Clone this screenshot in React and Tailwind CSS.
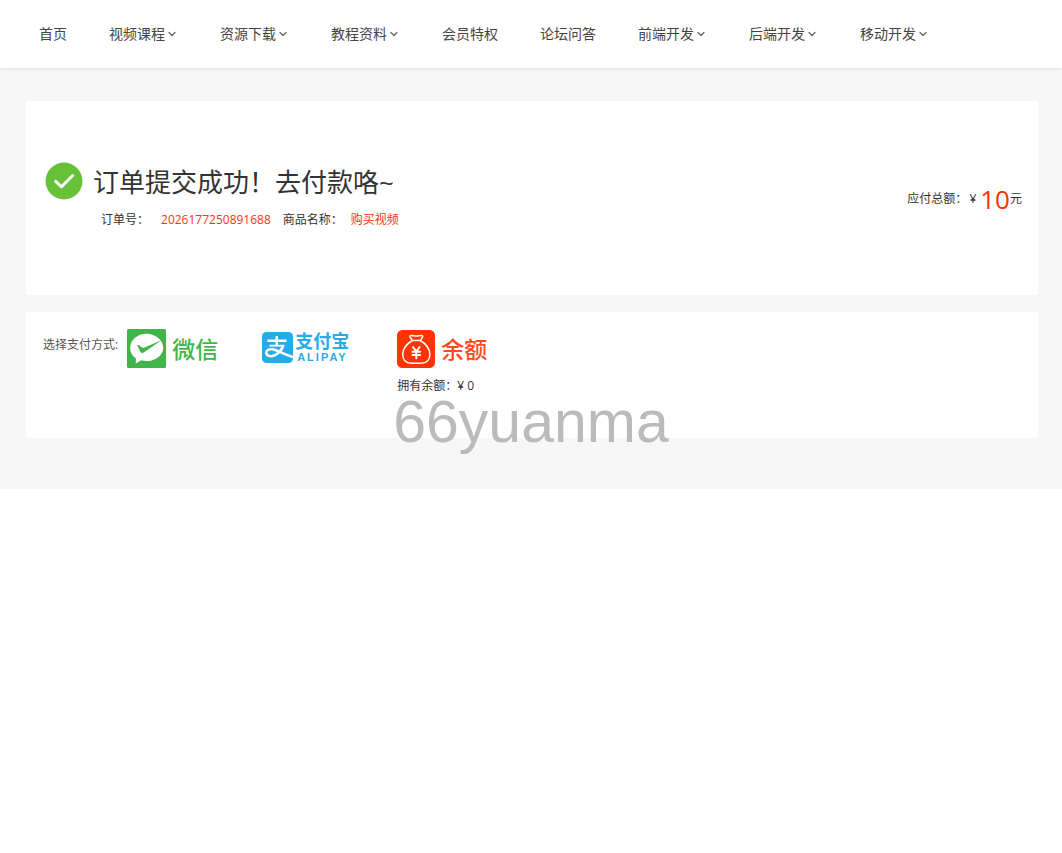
import { ChevronDown } from 'lucide-react'

const NAV = [
  { label: '首页' },
  { label: '视频课程', menu: true },
  { label: '资源下载', menu: true },
  { label: '教程资料', menu: true },
  { label: '会员特权' },
  { label: '论坛问答' },
  { label: '前端开发', menu: true },
  { label: '后端开发', menu: true },
  { label: '移动开发', menu: true },
]

function WechatIcon() {
  return (
    <svg viewBox="0 0 39 39" className="w-[39px] h-[39px]" aria-hidden="true">
      <rect width="39" height="39" rx="1.5" fill="#41b549" />
      <path
        d="M19.500 4.800C10.400 4.800 3.200 11 3.200 19c0 4.400 2.200 8 5.800 10.600L8.700 34.500l5.500-3.200c1.700.5 3.500.8 5.300.8 9.300 0 16.700-6 16.700-13.400S28.500 4.800 19.500 4.800z"
        fill="#fff"
      />
      <path d="M10.200 16.200c1.200-.4 2.200.2 3.200 1.200l3 1.700L35 11 17 23.300c-1.500 1-2.900.9-3.600-.6z" fill="#41b549" />
    </svg>
  )
}

function AlipayIcon() {
  return (
    <svg viewBox="0 0 31 31" className="w-[31px] h-[31px]" aria-hidden="true">
      <rect width="31" height="31" rx="4.5" fill="#28abec" />
      <g fill="none" stroke="#fff" strokeLinecap="butt">
        <path d="M5.500 8.700h19M14.800 4v10" strokeWidth="2.400" />
        <path d="M7.500 13.700h14.500" strokeWidth="1.800" />
        <path
          d="M21.500 13c-1.500 4.500-4.500 7.800-8 9.900-3.500 2.100-8.800 1.600-9.200-1.800-.4-3.200 3.600-4.600 7.500-3.600 5 1.400 10 5 19.200 7.500"
          strokeWidth="2.500"
        />
      </g>
    </svg>
  )
}

function BalanceIcon() {
  return (
    <svg viewBox="0 0 38 38" className="w-[38px] h-[38px]" aria-hidden="true">
      <rect width="38" height="38" rx="5.500" fill="#ff3400" />
      <g fill="none" stroke="#fff" strokeLinecap="round" strokeLinejoin="round">
        <path
          d="M15.300 10.500l-2.200-3.300c-.5-1 0-1.700 1-1.700 1.900 0 3.200.6 5.200.6s3.300-.6 5.200-.6c1 0 1.500.7 1 1.700l-2.200 3.300z"
          strokeWidth="1.500"
        />
        <path
          d="M15.300 10.500C9.500 14 5.700 19.500 5.700 24.500c0 5.700 3.600 8.700 8.600 8.700h10c5 0 8.600-3 8.600-8.700 0-5-3.800-10.500-9.600-14"
          strokeWidth="1.500"
        />
        <path d="M16 17l3.300 4.500 3.300-4.500M19.300 21.500v6.700M15.500 21.700h7.600M15.500 25h7.600" strokeWidth="2" />
      </g>
    </svg>
  )
}

function SuccessIcon() {
  return (
    <svg viewBox="0 0 38 38" className="w-[38px] h-[38px]" aria-hidden="true">
      <circle cx="19" cy="19" r="18.500" fill="#67c23a" />
      <path
        d="M10.700 19.300l5.800 5.500 11.200-11.300"
        fill="none"
        stroke="#fff"
        strokeWidth="3"
        strokeLinecap="round"
        strokeLinejoin="round"
      />
    </svg>
  )
}

export default function App() {
  return (
    <div className="relative min-h-screen bg-white text-[#333] text-xs font-['Open_Sans','Noto_Sans_CJK_SC',sans-serif]">
      {/* Top navigation */}
      <header className="relative bg-white shadow-[0_1px_3px_rgba(0,0,0,0.1)]">
        <nav className="flex items-center gap-[42px] h-[68px] pl-[39px]">
          {NAV.map((item) => (
            <a key={item.label} href="#" className="flex items-center text-sm whitespace-nowrap text-[#444]">
              {item.label}
              {item.menu && <ChevronDown className="w-3 h-3 ml-px shrink-0 text-[#666]" strokeWidth={2.5} />}
            </a>
          ))}
        </nav>
      </header>

      <main className="flex flex-col gap-[17px] bg-[#f7f7f7] pt-[33px] pb-[51px] pl-[26px] pr-6">
        {/* Order summary */}
        <section className="flex items-center justify-between h-[194px] bg-white pl-[19px] pr-4">
          <div className="flex gap-[10px]">
            <SuccessIcon />
            <div className="flex flex-col">
              <h1 className="text-[26px] leading-10">订单提交成功！去付款咯~</h1>
              <dl className="flex pl-2 pt-0.5 -mb-0.5 leading-8">
                <dt>订单号：</dt>
                <dd className="text-[#ff3311] ml-3">2026177250891688</dd>
                <dt className="ml-3">商品名称：</dt>
                <dd className="text-[#ff3311] ml-2">购买视频</dd>
              </dl>
            </div>
          </div>
          <p className="flex items-center whitespace-nowrap pt-0.5">
            应付总额：<span className="ml-0.5 mr-1">¥</span>
            <strong className="font-normal text-[26px] leading-8 text-[#ff3300]">10</strong>元
          </p>
        </section>

        {/* Payment methods */}
        <section className="flex items-start h-[126px] bg-white pl-[17px] pt-[17px]">
          <h2 className="leading-8 text-[#555] mr-[9px]">选择支付方式:</h2>
          <button type="button" className="flex items-center gap-[6px] w-[135px] h-[39px] cursor-pointer">
            <WechatIcon />
            <span className="text-[23px] leading-8 font-medium text-[#41b549]">微信</span>
          </button>
          <button type="button" className="flex items-center gap-[2px] w-[135px] h-9 cursor-pointer">
            <AlipayIcon />
            <span className="flex flex-col text-left text-[#28abec]">
              <span className="text-lg leading-5 font-bold">支付宝</span>
              <span className="text-[11px] leading-3 font-bold tracking-[2px] pl-[2px] font-['Liberation_Sans',sans-serif]">
                ALIPAY
              </span>
            </span>
          </button>
          <div>
            <button type="button" className="flex items-center gap-[6px] h-[39px] cursor-pointer">
              <BalanceIcon />
              <span className="text-[23px] leading-8 font-medium text-[#ff4a1c]">余额</span>
            </button>
            <p className="leading-9">拥有余额：¥ 0</p>
          </div>
        </section>
      </main>

      {/* Watermark */}
      <div className="absolute inset-x-0 top-0 h-screen flex items-center justify-center pb-2 pointer-events-none">
        <span className="text-[59px] leading-none text-[#bbb] font-['Liberation_Sans',sans-serif]">66yuanma</span>
      </div>
    </div>
  )
}
